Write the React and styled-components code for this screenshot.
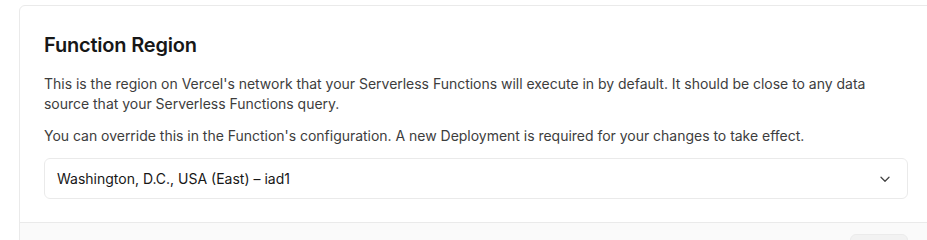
import React from "react";
import styled, { createGlobalStyle } from "styled-components";

const borderColor = "#eaeaea";

const GlobalStyle = createGlobalStyle`
  html, body {
    margin: 0;
    padding: 0;
    background: #ffffff;
    overflow: hidden;
  }
  body {
    font-family: Inter, "Noto Sans", sans-serif;
    -webkit-font-smoothing: antialiased;
  }
`;

const Page = styled.div`
  padding: 5px 0 0 19px;
`;

const Card = styled.section`
  width: 912px;
  border: 1px solid ${borderColor};
  border-radius: 6px;
  background: #ffffff;
  overflow: hidden;
`;

const Body = styled.div`
  padding: 24px 24px 23px 24px;
`;

const Title = styled.h2`
  margin: 0 0 14px;
  font-size: 20px;
  line-height: 30px;
  font-weight: 600;
  letter-spacing: -0.2px;
  color: #171717;
`;

const Text = styled.p`
  margin: 0 0 12px;
  font-size: 14px;
  line-height: 20px;
  letter-spacing: -0.02px;
  color: #3d3d3d;
`;

const Select = styled.div`
  display: flex;
  align-items: center;
  justify-content: space-between;
  height: 39px;
  margin-top: 12px;
  padding: 0 14px 0 12px;
  border: 1px solid ${borderColor};
  border-radius: 6px;
  font-size: 14px;
  color: #171717;
`;

const Chevron = styled.svg`
  width: 16px;
  height: 16px;
  color: #444;
`;

const Footer = styled.div`
  display: flex;
  justify-content: flex-end;
  padding: 11px 24px 12px;
  border-top: 1px solid ${borderColor};
  background: #fafafa;
`;

const SaveButton = styled.button`
  width: 58px;
  height: 32px;
  border: 1px solid #ebebeb;
  border-radius: 6px;
  background: #f2f2f2;
  color: #8f8f8f;
  font-family: inherit;
  font-size: 14px;
  font-weight: 500;
`;

function App() {
  return (
    <Page>
      <GlobalStyle />
      <Card>
        <Body>
          <Title>Function Region</Title>
          <Text>
            This is the region on Vercel's network that your Serverless Functions will execute in by
            default. It should be close to any data source that your Serverless Functions query.
          </Text>
          <Text>
            You can override this in the Function's configuration. A new Deployment is required for
            your changes to take effect.
          </Text>
          <Select>
            <span>Washington, D.C., USA (East) – iad1</span>
            <Chevron viewBox="0 0 16 16" fill="none">
              <path
                d="M4 6.25 8 10.25 12 6.25"
                stroke="currentColor"
                strokeWidth="1.3"
                strokeLinecap="round"
                strokeLinejoin="round"
              />
            </Chevron>
          </Select>
        </Body>
        <Footer>
          <SaveButton disabled>Save</SaveButton>
        </Footer>
      </Card>
    </Page>
  );
}

export default App;
